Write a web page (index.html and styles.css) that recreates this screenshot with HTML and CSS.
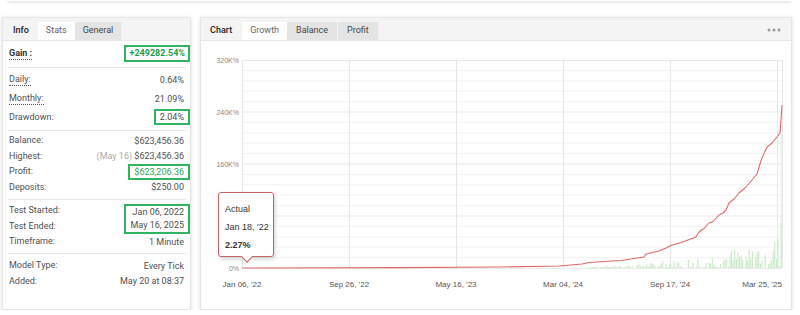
FILE: index.html
```html
<!DOCTYPE html>
<html lang="en">
<head>
	<meta charset="UTF-8">
	<title>Stats and Growth chart</title>
	<link rel="stylesheet" href="styles.css">
	<script type="text/javascript">
		window.onload=function(){
			var bars = document.getElementById('bars');
			var seed = 7;
			function rnd(){
				seed = (seed*9301+49297)%233280;
				return seed/233280;
			}
			var out = '';
			//green bars of daily growth, getting taller towards the end
			for(var x=386;x<579;x+=1.6){
				var t=(x-386)/193;
				var env=2+t*t*32;
				var r=rnd();
				if(r<0.12){continue;}
				var h=env*Math.pow(rnd(),1.2);
				if(h<1){h=1;}
				out+='<rect x="'+x.toFixed(1)+'" y="'+(227-h).toFixed(1)+'" width="1.1" height="'+h.toFixed(1)+'"/>';
			}
			out+='<rect x="579.6" y="182" width="1.2" height="45"/>';
			bars.innerHTML=out;
		};
	</script>
</head>
<body>
	<div class="prev"></div>
	<div class="wrap">
		<div class="card side">
			<div class="tabs">
				<span class="tab title">Info</span>
				<span class="tab on">Stats</span>
				<span class="tab off">General</span>
			</div>
			<div class="group g1">
				<span class="lbl dot strong">Gain :</span><span class="val hl gain">+249282.54%</span>
			</div>
			<div class="group g2">
				<span class="lbl dot">Daily:</span><span class="val">0.64%</span>
				<span class="lbl dot">Monthly:</span><span class="val">21.09%</span>
				<span class="lbl">Drawdown:</span><span class="val hl">2.04%</span>
			</div>
			<div class="group g3">
				<span class="lbl">Balance:</span><span class="val">$623,456.36</span>
				<span class="lbl">Highest:</span><span class="val"><span class="muted">(May 16)</span> $623,456.36</span>
				<span class="lbl">Profit:</span><span class="val hl profit">$623,206.36</span>
				<span class="lbl">Deposits:</span><span class="val">$250.00</span>
			</div>
			<div class="group g4">
				<span class="lbl">Test Started:</span>
				<div class="val hl two"><div>Jan 06, 2022</div><div>May 16, 2025</div></div>
				<span class="lbl">Test Ended:</span>
				<span class="lbl">Timeframe:</span><span class="val">1 Minute</span>
			</div>
			<div class="group g5">
				<span class="lbl">Model Type:</span><span class="val">Every Tick</span>
				<span class="lbl">Added:</span><span class="val">May 20 at 08:37</span>
			</div>
		</div>

		<div class="card main">
			<div class="tabs">
				<span class="tab title">Chart</span>
				<span class="tab on">Growth</span>
				<span class="tab off">Balance</span>
				<span class="tab off">Profit</span>
				<span class="more">
					<svg width="14" height="4" viewBox="0 0 14 4"><circle cx="2" cy="2" r="1.5"/><circle cx="7" cy="2" r="1.5"/><circle cx="12" cy="2" r="1.5"/></svg>
				</span>
			</div>
			<div class="chart">
				<svg class="plot" width="590" height="268" viewBox="0 0 590 268">
					<path class="minor" d="M41 29.4H581M41 39.8H581M41 50.2H581M41 60.6H581M41 81.4H581M41 91.8H581M41 102.2H581M41 112.6H581M41 133.4H581M41 143.8H581M41 154.2H581M41 164.6H581M41 185.4H581M41 195.8H581M41 206.2H581M41 216.6H581"/>
					<path class="major" d="M41 19.5H581M41 71H581M41 123H581M41 175H581"/>
					<path class="vert" d="M41.5 19V227M148.5 19V227M255.5 19V227M362.5 19V227M469.5 19V227M576.5 19V227M581.5 19V227"/>
					<g id="bars" class="bars"></g>
					<rect class="thin" x="579.6" y="84" width="1" height="143"/>
					<path class="zero" d="M41 227.5H581"/>
					<polyline class="line" points="41,227 198,226.6 298,226 358,225 381,223 388,221.5 420,219.5 443,216 445,213 458,210 465,207 471,204 480,201.5 487,199 495,196 498,191 503,187.5 508,182 512,180.5 518,174 522,172 525,169 528,162 533,158 538,152 544,147 551,139 556,133 558,126 561,117 566,106 571,102 576,96 579,92 581,64"/>
					<g class="ylab">
						<text x="38" y="21.5">320K%</text>
						<text x="38" y="73.5">240K%</text>
						<text x="38" y="125.5">160K%</text>
						<text x="38" y="177.5">80K%</text>
						<text x="38" y="229.5">0%</text>
					</g>
					<g class="xlab">
						<text x="41" y="246">Jan 06, '22</text>
						<text x="148" y="246">Sep 26, '22</text>
						<text x="255" y="246">May 16, '23</text>
						<text x="362" y="246">Mar 04, '24</text>
						<text x="469" y="246">Sep 17, '24</text>
						<text x="581" y="246" class="end">Mar 25, '25</text>
					</g>
				</svg>
				<div class="tip">
					<div>Actual</div>
					<div>Jan 18, '22</div>
					<div class="strong">2.27%</div>
				</div>
			</div>
		</div>
	</div>
</body>
</html>
```

FILE: styles.css
```css
*{margin:0;padding:0;box-sizing:border-box;}
body{
	background:#fff;
	font-family:Roboto,"Liberation Sans",Arial,sans-serif;
	font-size:9px;
	color:#505050;
}
.prev{
	height:1px;
	margin:0 9px 0 8px;
	box-shadow:0 1px 3px rgba(0,0,0,.3);
}
.wrap{
	display:flex;
	gap:9px;
	padding:16px 8px 0 2px;
}
.card{
	border:1px solid #e6e6e6;
	box-shadow:0 1px 4px rgba(0,0,0,.14);
	background:#fff;
	display:flex;
	flex-direction:column;
}
.side{width:190px;}
.main{flex:1;}

/* tab strip on top of each card */
.tabs{
	display:flex;
	align-items:flex-end;
	height:23px;
	padding:5px 0 0 1px;
	background:#f4f4f4;
	border-bottom:1px solid #e8e8e8;
	font-size:9px;
}
.tab{
	height:18px;
	line-height:17px;
	padding:0 8px;
	color:#555;
}
.tab.title{color:#222;font-weight:500;padding:0 9px;}
.main .tab.title{padding:0 10px 0 8px;}
.tab.on{background:#fff;color:#666;}
.tab.off{background:#e4e4e4;color:#444;margin-right:1px;}
.main .tab.on{padding:0 8px;}
.main .tab.off{padding:0 9px;}
.more{margin-left:auto;align-self:center;padding:0 10px 3px 0;line-height:0;}
.more svg{fill:#9a9a9a;}

/* stats rows */
.group{
	display:grid;
	grid-template-columns:1fr auto;
	align-items:center;
	margin:0 4px 0 5px;
	padding:0 2px 0 1px;
	border-bottom:1px solid #e8e8e8;
}
.g1{padding-top:4px;padding-bottom:5px;grid-auto-rows:17px;}
.g2{padding-top:3px;padding-bottom:3px;grid-auto-rows:18.5px;}
.g3{padding-top:2.5px;padding-bottom:3.5px;grid-auto-rows:15.5px;}
.g4{padding-top:3.5px;padding-bottom:3.5px;grid-auto-rows:15.5px;}
.g5{padding-top:4px;border-bottom:none;grid-auto-rows:15.5px;}
.lbl{justify-self:start;line-height:11px;}
.dot{border-bottom:1px dotted #555;}
.strong{font-weight:bold;color:#333;}
.val{justify-self:end;text-align:right;}
.muted{color:#aaa;}
.hl{
	border:2px solid #30b462;
	padding:0 4px;
	margin-right:-6px;
	line-height:12px;
}
.gain{color:#1a9e4a;font-weight:bold;line-height:13px;padding:0 3px 0 4px;}
.profit{color:#2aa55a;}
.two{grid-row:1 / span 2;grid-column:2;line-height:13px;}
.g4 .lbl{grid-column:1;}

/* chart */
.chart{
	position:relative;
	height:268px;
	font-family:"Liberation Sans",Arial,sans-serif;
}
.plot{display:block;}
.minor{stroke:#f3f3f3;stroke-width:1;fill:none;}
.major{stroke:#e9e9e9;stroke-width:1;fill:none;}
.vert{stroke:#e6e6e6;stroke-width:1;fill:none;}
.zero{stroke:#eaeaea;stroke-width:1;}
.bars{fill:#c9e9c5;}
.thin{fill:#dcf0da;}
.line{fill:none;stroke:#de6a68;stroke-width:1.1;stroke-linejoin:round;}
.ylab text{font-size:7px;fill:#888;text-anchor:end;}
.xlab text{font-size:8px;fill:#555;text-anchor:middle;}
.xlab text.end{text-anchor:end;}
.tip{
	position:absolute;
	left:17px;
	top:151px;
	width:56px;
	height:65px;
	padding:7px 0 0 6px;
	background:#fff;
	border:1px solid #c46462;
	border-radius:3px;
	box-shadow:1px 2px 4px rgba(0,0,0,.18);
	font-size:9px;
	line-height:18px;
	color:#333;
}
.tip:after{
	content:"";
	position:absolute;
	left:24px;
	bottom:-5px;
	width:7px;
	height:7px;
	background:#fff;
	border-right:1px solid #c46462;
	border-bottom:1px solid #c46462;
	transform:rotate(45deg);
}
```
